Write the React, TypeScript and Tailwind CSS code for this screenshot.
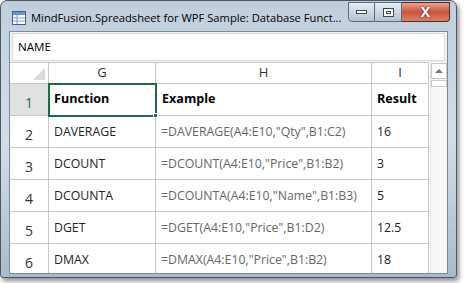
import { Fragment } from "react";

const rows = [
  { n: "2", fn: "DAVERAGE", ex: '=DAVERAGE(A4:E10,"Qty",B1:C2)', res: "16" },
  { n: "3", fn: "DCOUNT", ex: '=DCOUNT(A4:E10,"Price",B1:B2)', res: "3" },
  { n: "4", fn: "DCOUNTA", ex: '=DCOUNTA(A4:E10,"Name",B1:B3)', res: "5" },
  { n: "5", fn: "DGET", ex: '=DGET(A4:E10,"Price",B1:D2)', res: "12.5" },
  { n: "6", fn: "DMAX", ex: '=DMAX(A4:E10,"Price",B1:B2)', res: "18" },
];

function AppIcon() {
  return (
    <svg width="16" height="16" viewBox="0 0 16 16" className="shrink-0">
      <rect x="1.5" y="1.5" width="13" height="13" fill="#ffffff" stroke="#3a5f9c" />
      <rect x="2" y="2" width="12" height="3" fill="#6f93c9" />
      <path d="M2 8h12M2 11h12M6 5v9" stroke="#7d9bc8" strokeWidth="1" />
    </svg>
  );
}

export default function App() {
  return (
    <div className="w-[465px] h-[283px] bg-white overflow-hidden" style={{ fontFamily: '"Open Sans", "Noto Sans", sans-serif' }}>
      <div className="w-[457px] h-[278px] rounded-t-[7px] rounded-b-[3px] border border-[#4a5866] bg-gradient-to-b from-[#bfcedd] via-[#d3dde8] to-[#a9bacb] shadow-[2px_3px_5px_rgba(0,0,0,0.45)] flex flex-col">
        {/* title bar */}
        <div className="h-[30px] flex items-start shrink-0">
          <div className="flex items-center pt-[9px] pl-[10px] gap-[4px] flex-1 min-w-0 overflow-hidden">
            <AppIcon />
            <span className="text-[11.2px] leading-none text-black whitespace-nowrap">
              MindFusion.Spreadsheet for WPF Sample: Database Funct...
            </span>
          </div>
          <div className="flex mr-[6px] mt-[1px] h-[20px] shrink-0">
            <div className="w-[27px] h-[20px] rounded-bl-[4px] border border-[#5b6b7c] bg-gradient-to-b from-[#e6edf5] to-[#b2c2d3] flex items-center justify-center">
              <div className="w-[11px] h-[4px] bg-white border border-[#38495a]" />
            </div>
            <div className="w-[27px] h-[20px] border-y border-r border-[#5b6b7c] bg-gradient-to-b from-[#e6edf5] to-[#b2c2d3] flex items-center justify-center">
              <div className="w-[11px] h-[9px] border border-[#38495a] bg-white flex items-center justify-center">
                <div className="w-[5px] h-[3px] border border-[#38495a]" />
              </div>
            </div>
            <div className="w-[48px] h-[20px] rounded-br-[4px] border-y border-r border-[#5b2620] bg-gradient-to-b from-[#e8a493] via-[#c9533c] to-[#d7826b] flex items-center justify-center">
              <span className="text-white font-bold text-[14px] leading-none [text-shadow:0_0_2px_#3b1010]">X</span>
            </div>
          </div>
        </div>

        {/* client */}
        <div className="flex-1 mx-[8px] mb-[3px] border border-[#7a8a9b] bg-[#f3f3f3] flex flex-col min-h-0">
          <div className="h-[30px] px-[2px] pt-[1px] shrink-0">
            <div className="h-[28px] border border-[#d8d8d8] bg-white flex items-center pl-[5px] text-[11.6px] text-black">NAME</div>
          </div>
          <div className="flex-1 flex min-h-0 bg-white">
            <div className="w-[421px] overflow-hidden">
              <div className="grid grid-cols-[39px_107px_216px_57px] border-t border-[#c8c8c8] text-[12.3px] text-black">
                {/* header */}
                <div className="h-[21px] border-r border-b border-[#c8c8c8] bg-white relative">
                  <div className="absolute right-[3px] bottom-[3px] w-0 h-0 border-l-[12px] border-l-transparent border-b-[12px] border-b-[#dadada]" />
                </div>
                <div className="h-[21px] border-r border-b border-[#c8c8c8] bg-white flex items-center justify-center text-[13px] text-[#333]">G</div>
                <div className="h-[21px] border-r border-b border-[#c8c8c8] bg-white flex items-center justify-center text-[13px] text-[#333]">H</div>
                <div className="h-[21px] border-r border-b border-[#c8c8c8] bg-white flex items-center justify-center text-[13px] text-[#333]">I</div>

                {/* row 1 */}
                <div className="h-[32px] border-r border-b border-[#c8c8c8] bg-[#e1e1e1] flex items-end justify-center pb-[2px] text-[#217346] text-[14px]">1</div>
                <div className="h-[32px] border-r border-b border-[#c8c8c8] relative">
                  <div className="absolute -left-[1px] -top-[1px] w-[109px] h-[34px] border-2 border-[#1e6b45]" />
                  <div className="absolute -right-[3px] -bottom-[3px] w-[5px] h-[5px] bg-[#1e6b45] border border-white" />
                  <div className="pl-[5px] pt-[6px] font-bold text-[12.6px]">Function</div>
                </div>
                <div className="h-[32px] border-r border-b border-[#c8c8c8] pl-[6px] pt-[6px] font-bold text-[12.6px]">Example</div>
                <div className="h-[32px] border-r border-b border-[#c8c8c8] pl-[5px] pt-[6px] font-bold text-[12.6px]">Result</div>

                {rows.map((r) => (
                  <Fragment key={r.n}>
                    <div className="h-[32px] border-r border-b border-[#c8c8c8] flex items-end justify-center pb-[2px] text-[14px] text-[#333]">{r.n}</div>
                    <div className="h-[32px] border-r border-b border-[#c8c8c8] pl-[5px] pt-[7px] whitespace-nowrap text-[#222]">{r.fn}</div>
                    <div className="h-[32px] border-r border-b border-[#c8c8c8] pl-[5px] pt-[7px] whitespace-nowrap text-[#666]">{r.ex}</div>
                    <div className="h-[32px] border-r border-b border-[#c8c8c8] pl-[5px] pt-[7px] whitespace-nowrap text-[#222]">{r.res}</div>
                  </Fragment>
                ))}
              </div>
            </div>
            {/* scrollbar */}
            <div className="w-[17px] ml-[1px] bg-[#f7f7f7] border-l border-[#e4e4e4] flex flex-col items-center pt-[1px]">
              <div className="w-[16px] h-[16px] border border-[#c9c9c9] bg-white flex items-center justify-center">
                <div className="w-0 h-0 border-l-[4px] border-r-[4px] border-b-[4px] border-l-transparent border-r-transparent border-b-[#777]" />
              </div>
              <div className="w-[16px] h-[7px] mt-[1px] border border-[#c9c9c9] bg-white" />
            </div>
          </div>
        </div>
      </div>
    </div>
  );
}
